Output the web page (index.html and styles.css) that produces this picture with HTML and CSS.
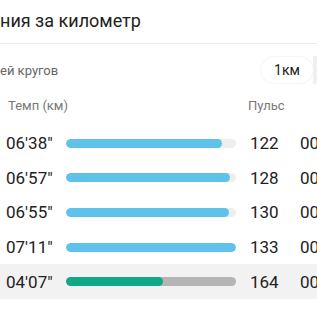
FILE: index.html
```html
<html>
<head>
<title>Темп за километр</title>
<link rel="stylesheet" href="styles.css">
</head>
<body>

<div class="title">ния за километр</div>

<div class="controls">
  <span class="label">ей кругов</span>
  <div class="seg">
    <span class="pill">1км</span>
    <span class="seg-rest"></span>
  </div>
</div>

<div class="head">
  <span class="h-pace">Темп (км)</span>
  <span class="h-pulse">Пульс</span>
</div>

<div class="row">
  <span class="pace">06'38"</span>
  <div class="track"><div class="fill" style="width:92%"></div></div>
  <span class="pulse">122</span>
  <span class="time">00:06:38</span>
</div>
<div class="row">
  <span class="pace">06'57"</span>
  <div class="track"><div class="fill" style="width:96.5%"></div></div>
  <span class="pulse">128</span>
  <span class="time">00:13:35</span>
</div>
<div class="row">
  <span class="pace">06'55"</span>
  <div class="track"><div class="fill" style="width:96%"></div></div>
  <span class="pulse">130</span>
  <span class="time">00:20:30</span>
</div>
<div class="row">
  <span class="pace">07'11"</span>
  <div class="track"><div class="fill" style="width:100%"></div></div>
  <span class="pulse">133</span>
  <span class="time">00:27:41</span>
</div>
<div class="row last">
  <span class="pace">04'07"</span>
  <div class="track grey"><div class="fill green" style="width:57%"></div></div>
  <span class="pulse">164</span>
  <span class="time">00:31:48</span>
</div>

</body>
</html>
```
FILE: styles.css
```css
body
{
  margin: 0;
  width: 317px;
  overflow: hidden;
  background: #fff;
  font-family: Roboto, "Noto Sans", sans-serif;
  color: #222;
}
.title
{
  height: 43px;
  line-height: 42px;
  font-size: 18px;
  border-bottom: 1px solid #ececec;
  white-space: nowrap;
}
.controls
{
  height: 48px;
  display: flex;
  align-items: center;
  justify-content: space-between;
  padding-top: 2px;
}
.label
{
  font-size: 13px;
  color: #666;
}
.seg
{
  display: flex;
  align-items: center;
  height: 28px;
}
.pill
{
  width: 52px;
  height: 26px;
  line-height: 26px;
  text-align: center;
  font-size: 14px;
  color: #222;
  background: #fff;
  border-radius: 13px;
  box-shadow: 0 0 2px rgba(0,0,0,0.12);
}
.seg-rest
{
  width: 4px;
  height: 28px;
  background: #f0f0f0;
}
.head
{
  height: 22px;
  display: flex;
  align-items: center;
  font-size: 13px;
  color: #777;
  margin-bottom: 10px;
}
.h-pace
{
  margin-left: 8px;
  width: 240px;
}
.row
{
  height: 34.6px;
  display: flex;
  align-items: center;
  white-space: nowrap;
}
.row > *
{
  flex: none;
}
.row.last
{
  background: #f2f2f2;
}
.pace
{
  width: 66px;
  padding-left: 6px;
  box-sizing: border-box;
  font-size: 17px;
}
.track
{
  width: 170px;
  height: 9px;
  border-radius: 5px;
  background: #eeeeee;
  overflow: hidden;
}
.track.grey
{
  background: #b5b5b5;
}
.fill
{
  height: 100%;
  border-radius: 5px;
  background: #5ec2ea;
}
.fill.green
{
  background: #10a986;
}
.pulse
{
  margin-left: 14px;
  width: 50px;
  font-size: 17px;
}
.time
{
  font-size: 17px;
}
```
